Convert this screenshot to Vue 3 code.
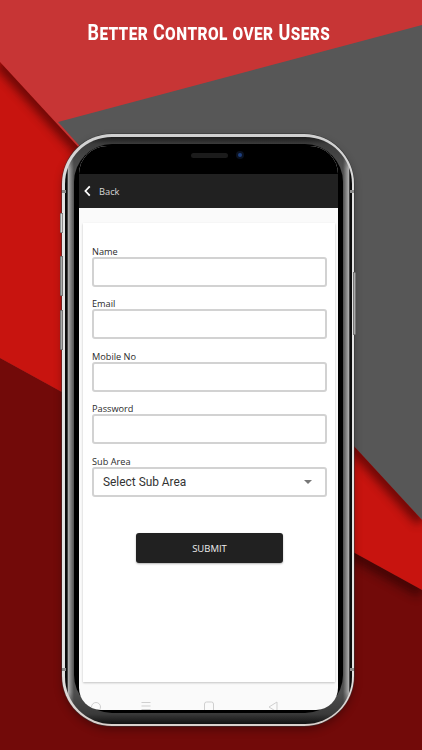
<script setup>
const fields = ['Name', 'Email', 'Mobile No', 'Password']
</script>

<template>
  <div class="page">
    <svg class="backdrop" viewBox="0 0 422 750" aria-hidden="true">
      <defs>
        <filter id="soft" x="-20%" y="-20%" width="140%" height="140%"><feGaussianBlur stdDeviation="5" /></filter>
        <clipPath id="redClip"><polygon points="0,62 422,520 422,590 0,358" /></clipPath>
        <clipPath id="darkClip"><polygon points="0,358 422,590 422,750 0,750" /></clipPath>
      </defs>
      <rect width="422" height="750" fill="#c73535" />
      <polygon points="58,122 422,25 422,520 354,449" fill="#575757" />
      <polygon points="0,62 422,520 422,590 0,358" fill="#c8140f" />
      <polygon points="0,358 422,590 422,750 0,750" fill="#720a09" />
      <g clip-path="url(#redClip)">
        <line x1="0" y1="62" x2="422" y2="520" stroke="#300" stroke-width="14" opacity=".6" filter="url(#soft)" />
      </g>
      <g clip-path="url(#darkClip)">
        <line x1="200" y1="468" x2="422" y2="590" stroke="#200" stroke-width="16" opacity=".55" filter="url(#soft)" />
      </g>
    </svg>

    <h1 class="title"><span class="title-text">Better Control over Users</span></h1>

    <div class="phone">
      <i class="key key-a"></i>
      <i class="key key-b"></i>
      <i class="key key-c"></i>
      <i class="key key-d"></i>
      <i class="tick tick-a"></i>
      <i class="tick tick-b"></i>
      <i class="tick tick-c"></i>
      <i class="tick tick-d"></i>
      <div class="band">
        <div class="bezel">
          <div class="screen">
            <div class="notch">
              <span class="speaker"></span>
              <span class="camera"></span>
            </div>
            <header class="bar">
              <svg class="chevron" viewBox="0 0 8 13"><path d="M6.6 1.2 1.6 6.5l5 5.3" /></svg>
              <span>Back</span>
            </header>
            <main class="body">
              <form class="card" @submit.prevent>
                <label v-for="f in fields" :key="f" class="field">
                  <span class="label">{{ f }}</span>
                  <input class="control" type="text" />
                </label>
                <div class="field">
                  <span class="label">Sub Area</span>
                  <div class="control select">
                    <span>Select Sub Area</span>
                    <svg viewBox="0 0 8 4" class="caret"><path d="M0 0h8L4 4z" /></svg>
                  </div>
                </div>
                <button class="submit" type="submit">SUBMIT</button>
              </form>
            </main>
            <nav class="nav">
              <svg viewBox="0 0 259 10">
                <circle cx="17" cy="7" r="4.5" />
                <path d="M62.5 2.5h9M62.5 6h9M62.5 9.5h9" />
                <rect x="125.5" y="2" width="9" height="12" rx="2" />
                <path d="M198 2 190 7l8 5z" />
              </svg>
            </nav>
          </div>
        </div>
      </div>
    </div>
  </div>
</template>

<style>
html, body { margin: 0; background: #720a09; }
</style>

<style scoped>
.page {
  position: relative;
  width: 422px;
  height: 750px;
  overflow: hidden;
  display: flex;
  flex-direction: column;
  font-family: "Open Sans", sans-serif;
}
.backdrop {
  position: absolute;
  inset: 0;
  width: 422px;
  height: 750px;
}
.title {
  position: relative;
  height: 134px;
  margin: 0;
  padding-top: 19px;
  padding-right: 5px;
  box-sizing: border-box;
  text-align: center;
  color: #fff;
  font-family: Roboto, sans-serif;
  font-size: 22px;
  line-height: 28px;
  font-weight: 700;
  font-variant: small-caps;
  letter-spacing: .5px;
}
.title-text {
  display: inline-block;
  white-space: nowrap;
  transform: scaleX(.815);
}
.phone {
  position: relative;
  box-sizing: border-box;
  width: 292px;
  height: 592px;
  margin-left: 62px;
  padding: 2.5px;
  border-radius: 50px;
  background: linear-gradient(180deg, #cfcfcf 0, #e2e2e2 12%, #e2e2e2 90%, #d8d0cc 100%);
  box-shadow: 0 0 0 .5px #333, 0 4px 8px rgba(0, 0, 0, .3);
}
.key {
  position: absolute;
  width: 3px;
  background: #a9a9a9;
  border-radius: 1px;
  box-shadow: inset 0 0 0 .5px #444;
}
.key-a { left: -2px; top: 79px; height: 20px; background: #d5d5d5; }
.key-b { left: -2px; top: 122px; height: 40px; }
.key-c { left: -2px; top: 176px; height: 40px; }
.key-d { right: -2px; top: 138px; height: 63px; }
.tick {
  position: absolute;
  width: 4px;
  height: 3px;
  background: #8c8c8c;
}
.tick-a { left: 0; top: 56px; }
.tick-b { right: 0; top: 56px; }
.tick-c { left: 0; top: 534px; }
.tick-d { right: 0; top: 534px; }
.band {
  box-sizing: border-box;
  height: 100%;
  padding: 7.5px 8.5px 10.5px 9.5px;
  border-radius: 47px;
  background:
    linear-gradient(180deg, #1c1c1c 0, #3c3c3c 7px, rgba(0, 0, 0, 0) 32px, rgba(0, 0, 0, 0) calc(100% - 32px), #3a3a3a calc(100% - 10px), #111 100%),
    linear-gradient(90deg, #0c0c0c 0, #0c0c0c 2px, #a8a8a8 3.5px, #4e4e4e 9px, #4e4e4e calc(100% - 9px), #a8a8a8 calc(100% - 3.5px), #0c0c0c calc(100% - 2px), #0c0c0c 100%);
}
.bezel {
  box-sizing: border-box;
  height: 100%;
  padding: 2px 5px 3px;
  border-radius: 38px;
  background: #000;
}
.screen {
  height: 100%;
  display: flex;
  flex-direction: column;
  overflow: hidden;
  border-radius: 28px 28px 22px 22px;
  background: #fafafa;
}
.notch {
  height: 28px;
  flex: none;
  background: #000;
  display: flex;
  align-items: center;
  justify-content: center;
  gap: 10px;
  padding-left: 15px;
  padding-bottom: 10px;
  box-sizing: border-box;
}
.speaker {
  width: 37px;
  height: 5px;
  border-radius: 3px;
  background: #1b1b1b;
}
.camera {
  width: 4px;
  height: 4px;
  border-radius: 50%;
  background: #1d3f7e;
  box-shadow: 0 0 0 2px #0b1220;
}
.bar {
  height: 34px;
  flex: none;
  box-sizing: border-box;
  background: #212121;
  display: flex;
  align-items: center;
  gap: 8px;
  padding-left: 5px;
  color: #d8d8d8;
  font-size: 9.3px;
}
.chevron {
  width: 7px;
  height: 12px;
  fill: none;
  stroke: #fff;
  stroke-width: 2;
}
.body {
  flex: 1;
  display: flex;
  padding: 15px 3px 0 4px;
  min-height: 0;
}
.card {
  width: 100%;
  height: 459px;
  box-sizing: border-box;
  padding: 22px 8px 0 9px;
  background: #fff;
  box-shadow: 0 1px 2px rgba(0, 0, 0, .22);
  display: flex;
  flex-direction: column;
  gap: 10.45px;
}
.field {
  display: flex;
  flex-direction: column;
  font-size: 9.2px;
  color: #2b2b2b;
}
.label {
  line-height: 14px;
  margin-bottom: -2px;
}
.control {
  box-sizing: border-box;
  width: 100%;
  height: 30px;
  margin: 0;
  padding: 0;
  border: 2px solid #d2d2d2;
  border-radius: 3px;
  background: #fff;
  outline: none;
}
.select {
  display: flex;
  align-items: center;
  justify-content: space-between;
  padding: 1px 13px 0 9px;
  font: 11.9px Roboto, sans-serif;
  color: #333;
}
.caret {
  width: 8px;
  height: 4px;
  fill: #777;
}
.submit {
  align-self: center;
  width: 147px;
  height: 30px;
  margin-top: 26px;
  padding: 0;
  border: 0;
  border-radius: 3px;
  background: #212121;
  color: #eee;
  font: 9.5px "Open Sans", sans-serif;
  box-shadow: 0 1px 2px rgba(0, 0, 0, .3);
}
.nav {
  height: 13px;
  flex: none;
  margin-top: auto;
  overflow: hidden;
}
.nav svg {
  display: block;
  width: 259px;
  height: 10px;
  margin-top: 3px;
  fill: none;
  stroke: #cfcfcf;
  stroke-width: 1;
}
</style>
